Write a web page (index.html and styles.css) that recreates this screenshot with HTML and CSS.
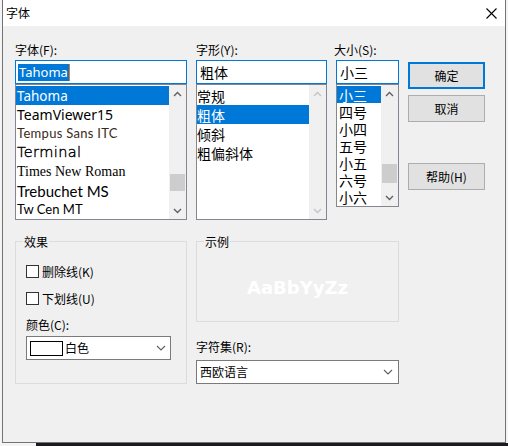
FILE: index.html
```html
<!DOCTYPE html>
<html lang="zh-CN">
<head>
<meta charset="utf-8">
<title>字体</title>
<link rel="stylesheet" href="styles.css">
</head>
<body>
<div class="window">
  <div class="titlebar">
    <span class="title">字体</span>
    <svg class="close" width="11" height="11" viewBox="0 0 11 11"><path d="M0.5 0.5L10.5 10.5M10.5 0.5L0.5 10.5" stroke="#000" stroke-width="1.1" fill="none"/></svg>
  </div>
  <div class="content">
    <div class="top">
      <div class="col">
        <div class="label">字体(F):</div>
        <div class="input latin"><span class="sel">Tahoma</span><span class="caret"></span></div>
        <div class="list h-font">
          <div class="items">
            <div class="item f-tahoma on">Tahoma</div>
            <div class="item f-team">TeamViewer15</div>
            <div class="item f-tempus">Tempus Sans ITC</div>
            <div class="item f-terminal">Terminal</div>
            <div class="item f-times">Times New Roman</div>
            <div class="item f-treb">Trebuchet MS</div>
            <div class="item f-twcen">Tw Cen MT</div>
          </div>
          <div class="scroll">
            <div class="arrow"><svg width="9" height="6" viewBox="0 0 9 6"><path d="M1 5L4.5 1.5L8 5" stroke="#606060" stroke-width="1.4" fill="none"/></svg></div>
            <div class="track"><div class="thumb t-font"></div></div>
            <div class="arrow"><svg width="9" height="6" viewBox="0 0 9 6"><path d="M1 1L4.5 4.5L8 1" stroke="#606060" stroke-width="1.4" fill="none"/></svg></div>
          </div>
        </div>
      </div>
      <div class="col">
        <div class="label">字形(Y):</div>
        <div class="input">粗体</div>
        <div class="list h-font">
          <div class="items cjk-items">
            <div class="item">常规</div>
            <div class="item on">粗体</div>
            <div class="item">倾斜</div>
            <div class="item">粗偏斜体</div>
          </div>
          <div class="scroll">
            <div class="arrow"><svg width="9" height="6" viewBox="0 0 9 6"><path d="M1 5L4.5 1.5L8 5" stroke="#c4c4c4" stroke-width="1.4" fill="none"/></svg></div>
            <div class="track"></div>
            <div class="arrow"><svg width="9" height="6" viewBox="0 0 9 6"><path d="M1 1L4.5 4.5L8 1" stroke="#c4c4c4" stroke-width="1.4" fill="none"/></svg></div>
          </div>
        </div>
      </div>
      <div class="col">
        <div class="label shift">大小(S):</div>
        <div class="input">小三</div>
        <div class="list h-size">
          <div class="items size-items">
            <div class="item on">小三</div>
            <div class="item">四号</div>
            <div class="item">小四</div>
            <div class="item">五号</div>
            <div class="item">小五</div>
            <div class="item">六号</div>
            <div class="item">小六</div>
          </div>
          <div class="scroll">
            <div class="arrow"><svg width="9" height="6" viewBox="0 0 9 6"><path d="M1 5L4.5 1.5L8 5" stroke="#606060" stroke-width="1.4" fill="none"/></svg></div>
            <div class="track"><div class="thumb t-size"></div></div>
            <div class="arrow"><svg width="9" height="6" viewBox="0 0 9 6"><path d="M1 1L4.5 4.5L8 1" stroke="#606060" stroke-width="1.4" fill="none"/></svg></div>
          </div>
        </div>
      </div>
      <div class="buttons">
        <div class="btn default">确定</div>
        <div class="btn">取消</div>
        <div class="btn help">帮助(H)</div>
      </div>
    </div>
    <div class="bottom">
      <fieldset class="group effects">
        <legend>效果</legend>
        <div class="effects-body">
          <div class="check"><span class="box"></span>删除线(K)</div>
          <div class="check second"><span class="box"></span>下划线(U)</div>
          <div class="label color-label">颜色(C):</div>
          <div class="combo color-combo"><span class="swatch"></span><span class="combo-text">白色</span><svg class="chev" width="10" height="6" viewBox="0 0 10 6"><path d="M1 1L5 5L9 1" stroke="#606060" stroke-width="1.1" fill="none"/></svg></div>
        </div>
      </fieldset>
      <div class="right">
        <fieldset class="group sample">
          <legend>示例</legend>
          <div class="sample-text">AaBbYyZz</div>
        </fieldset>
        <div class="label charset-label">字符集(R):</div>
        <div class="combo charset-combo"><span class="combo-text">西欧语言</span><svg class="chev" width="10" height="6" viewBox="0 0 10 6"><path d="M1 1L5 5L9 1" stroke="#606060" stroke-width="1.1" fill="none"/></svg></div>
      </div>
    </div>
  </div>
</div>
<div class="taskbar"></div>
</body>
</html>
```
FILE: styles.css
```css
html, body {
  margin: 0;
  padding: 0;
}
body {
  width: 508px;
  height: 446px;
  overflow: hidden;
  background: #f4f4f4;
  font-family: "Noto Sans CJK SC", "Noto Sans", sans-serif;
  font-size: 12px;
  color: #000;
}
.window {
  margin-left: 2px;
  width: 504px;
  height: 443px;
  box-sizing: border-box;
  border: 1px solid #737373;
  border-top: none;
  background: #f0f0f0;
  display: flex;
  flex-direction: column;
}
.titlebar {
  height: 26px;
  background: #fff;
  display: flex;
  align-items: center;
  justify-content: space-between;
  padding: 0 8px 0 3px;
  flex: none;
}
.title {
  line-height: 16px;
}
.close {
  display: block;
}
.content {
  padding: 16px 0 0 12px;
}
.top {
  display: grid;
  grid-template-columns: 172px 131px 63px 77px;
  column-gap: 9px;
  align-items: start;
}
.col {
  display: flex;
  flex-direction: column;
}
.label {
  line-height: 16px;
  height: 16px;
  white-space: nowrap;
}
.top .label {
  margin-bottom: 2px;
}
.label.shift {
  margin-left: -2px;
}
.input {
  height: 24px;
  box-sizing: border-box;
  border: 1px solid #0078d7;
  background: #fff;
  display: flex;
  align-items: center;
  padding-left: 3px;
  font-size: 14px;
  line-height: 17px;
}
.input.latin {
  padding-left: 2px;
  font-family: "Noto Sans", sans-serif;
  font-size: 13px;
}
.sel {
  background: #0078d7;
  color: #fff;
  padding: 0 1px;
  line-height: 17px;
}
.caret {
  width: 1px;
  height: 17px;
  background: #e0782c;
}
.list {
  box-sizing: border-box;
  border: 1px solid #828790;
  background: #fff;
  display: flex;
}
.h-font {
  height: 136px;
}
.h-size {
  height: 123px;
}
.items {
  flex: 1;
  padding-top: 1px;
  overflow: hidden;
  min-width: 0;
}
.item {
  white-space: nowrap;
  display: flex;
  align-items: center;
  padding-left: 1px;
  line-height: 16px;
  overflow: hidden;
}
.item.on {
  background: #0078d7;
  color: #fff;
}
.f-tahoma {
  height: 19px;
  font-family: "Noto Sans", sans-serif;
  font-size: 13.5px;
}
.f-team {
  height: 19px;
  font-family: "Noto Sans", sans-serif;
  font-size: 14px;
}
.f-tempus {
  height: 18px;
  font-family: "Lato", sans-serif;
  font-size: 13px;
  letter-spacing: 0.3px;
  color: #3a2a1a;
}
.f-terminal {
  height: 20px;
  font-family: "DejaVu Sans", sans-serif;
  font-weight: 200;
  font-size: 14.5px;
  letter-spacing: 0.4px;
  -webkit-text-stroke: 0.4px #000;
}
.f-times {
  height: 19px;
  font-family: "Liberation Serif", serif;
  font-size: 14px;
}
.f-treb {
  height: 19px;
  font-family: "Lato", sans-serif;
  font-size: 15px;
}
.f-twcen {
  height: 18px;
  font-family: "Lato", sans-serif;
  font-size: 13px;
}
.cjk-items .item {
  height: 19px;
  font-size: 14px;
  padding-left: 0;
}
.size-items .item {
  height: 17px;
  font-size: 14px;
  line-height: 14px;
  padding-left: 2px;
}
.scroll {
  width: 17px;
  flex: none;
  background: #f0f0f0;
  display: flex;
  flex-direction: column;
}
.arrow {
  height: 17px;
  display: flex;
  align-items: center;
  justify-content: center;
  flex: none;
}
.arrow svg {
  display: block;
}
.track {
  flex: 1;
}
.thumb {
  background: #cdcdcd;
  margin: 0 1px;
}
.t-font {
  margin-top: 72px;
  height: 17px;
}
.t-size {
  margin-top: 62px;
  height: 19px;
}
.buttons {
  display: flex;
  flex-direction: column;
  padding-top: 20px;
}
.btn {
  height: 27px;
  box-sizing: border-box;
  border: 1px solid #adadad;
  background: #e1e1e1;
  display: flex;
  align-items: center;
  justify-content: center;
  line-height: 16px;
}
.btn + .btn {
  margin-top: 6px;
}
.btn.default {
  border: 2px solid #0078d7;
}
.btn.help {
  margin-top: 41px;
}
.bottom {
  display: grid;
  grid-template-columns: 172px 203px;
  column-gap: 9px;
  margin-top: 14px;
  align-items: start;
}
.group {
  margin: 0;
  padding: 0;
  min-width: 0;
  border: 1px solid #dcdcdc;
  box-sizing: border-box;
}
.group legend {
  margin-left: 7px;
  padding: 0 1px;
  line-height: 15px;
  font-size: 12px;
}
.effects {
  height: 150px;
}
.effects-body {
  padding: 14px 0 0 10px;
}
.check {
  display: flex;
  align-items: center;
  height: 17px;
  line-height: 16px;
}
.check.second {
  margin-top: 10px;
}
.box {
  width: 13px;
  height: 13px;
  box-sizing: border-box;
  border: 1px solid #333;
  background: #fff;
  margin-right: 3px;
  flex: none;
}
.color-label {
  margin-top: 10px;
}
.combo {
  height: 24px;
  box-sizing: border-box;
  border: 1px solid #7a7a7a;
  background: #fff;
  display: flex;
  align-items: center;
  padding-left: 3px;
  line-height: 16px;
}
.combo-text {
  flex: 1;
}
.color-combo {
  margin-top: 3px;
  width: 145px;
  padding-right: 4px;
}
.swatch {
  width: 33px;
  height: 15px;
  box-sizing: border-box;
  border: 1px solid #000;
  background: #fff;
  margin-right: 2px;
  flex: none;
}
.chev {
  display: block;
  flex: none;
}
.right {
  display: flex;
  flex-direction: column;
}
.sample {
  height: 88px;
  display: flex;
  align-items: center;
  justify-content: center;
}
.sample-text {
  width: 100%;
  text-align: center;
  font-family: "DejaVu Sans", sans-serif;
  font-weight: bold;
  font-size: 18px;
  line-height: 22px;
  color: #fff;
  padding-top: 28px;
}
.charset-label {
  margin-top: 17px;
}
.charset-combo {
  margin-top: 5px;
  padding-right: 5px;
}
.taskbar {
  margin-left: 36px;
  height: 3px;
  background: #1b1b1f;
}
```
